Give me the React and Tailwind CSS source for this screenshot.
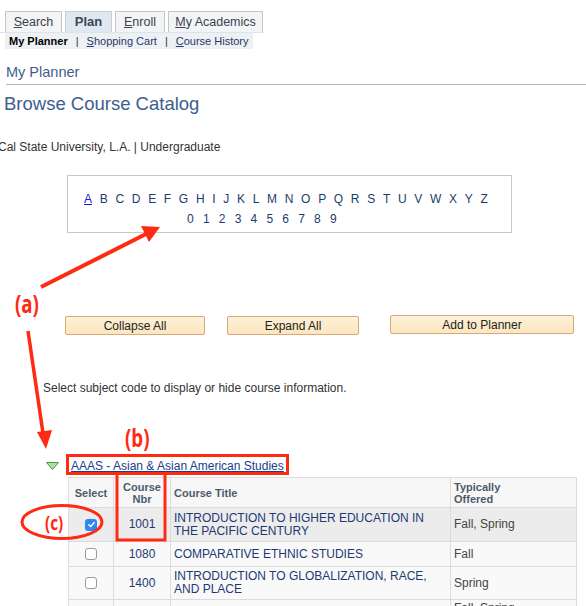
import React from 'react';

const letters = 'ABCDEFGHIJKLMNOPQRSTUVWXYZ'.split('');
const digits = '0123456789'.split('');

const courses = [
    { nbr: '1001', title: ['INTRODUCTION TO HIGHER EDUCATION IN', 'THE PACIFIC CENTURY'], offered: 'Fall, Spring', checked: true },
    { nbr: '1080', title: ['COMPARATIVE ETHNIC STUDIES'], offered: 'Fall' },
    { nbr: '1400', title: ['INTRODUCTION TO GLOBALIZATION, RACE,', 'AND PLACE'], offered: 'Spring' },
    { nbr: '', title: [''], offered: 'Fall, Spring' },
];

const Tab = ({ label, first, active, w }) => (
    <div
        className={`${w} h-[21px] flex items-center justify-center border border-b-0 whitespace-nowrap ${active
            ? 'bg-[#dfe8f1] border-[#c5d0dc] font-bold text-[#3b4656] text-[13px]'
            : 'bg-[#f3f4f6] border-[#c3c8ce] text-[#3a4350] text-[12.5px]'}`}
    >
        {active ? (
            label
        ) : (
            <span>
                <span className="underline">{first}</span>
                {label.slice(first.length)}
            </span>
        )}
    </div>
);

const Btn = ({ children, className }) => (
    <button className={`h-[19px] rounded-[2px] border border-[#d9a77a] bg-gradient-to-b from-[#fdf1d8] to-[#fbe6bf] text-[12px] text-[#222] ${className}`}>
        {children}
    </button>
);

const Check = ({ checked }) =>
    checked ? (
        <span className="w-[12px] h-[12px] rounded-[3px] bg-[#2f86f6] inline-flex items-center justify-center">
            <svg width="9" height="9" viewBox="0 0 10 10">
                <path d="M2 5.2 L4.2 7.3 L8 2.8" fill="none" stroke="white" strokeWidth="1.6" strokeLinecap="round" strokeLinejoin="round" />
            </svg>
        </span>
    ) : (
        <span className="w-[12px] h-[12px] rounded-[3px] border border-[#9a9a9a] bg-white inline-block" />
    );

const Annotations = () => (
    <svg className="absolute inset-0 pointer-events-none" width="586" height="606">
        <g stroke="#ff2a12" fill="#ff2a12">
            <line x1="41" y1="287" x2="146" y2="234" strokeWidth="4" />
            <polygon points="160,227 141,226 149,242" stroke="none" />
            <line x1="28" y1="331" x2="44" y2="440" strokeWidth="3.5" />
            <polygon points="46,449 37,432 52,430" stroke="none" />
            <rect x="67.5" y="455.5" width="220" height="18" fill="none" strokeWidth="3" />
            <path d="M117 474 V540 H165 V474" fill="none" strokeWidth="3" />
            <ellipse cx="62" cy="522" rx="40" ry="16.5" fill="none" strokeWidth="3" />
        </g>
        <g fill="#ff2a12" fontFamily="'Open Sans', sans-serif" fontWeight="bold">
            <text x="15" y="313" fontSize="22" transform="translate(15 313) scale(0.85 1.1) translate(-15 -313)">(a)</text>
            <text x="125" y="447" fontSize="22" transform="translate(125 447) scale(0.85 1.1) translate(-125 -447)">(b)</text>
            <text x="45" y="530" fontSize="18" transform="translate(45 530) scale(0.85 1.1) translate(-45 -530)">(c)</text>
        </g>
    </svg>
);

export default function App() {
    return (
        <div className="relative w-[586px] h-[606px] overflow-hidden bg-white" style={{ fontFamily: '"Liberation Sans", Arial, sans-serif' }}>
            <div className="pt-[11px] pl-[5px] flex gap-[3px]">
                <Tab label="Search" first="S" w="w-[57px]" />
                <Tab label="Plan" active w="w-[47px]" />
                <Tab label="Enroll" first="E" w="w-[50px]" />
                <Tab label="My Academics" first="M" w="w-[95px]" />
            </div>
            <div className="w-[264px] h-[1px] bg-[#dbe3ec]" />
            <div className="ml-[5px] w-[248px] h-[16px] bg-[#eef1f3] flex items-center whitespace-nowrap text-[11px] text-[#333] pl-[4px]">
                <span className="font-bold text-black">My Planner</span>
                <span className="mx-[8px]">|</span>
                <span className="text-[#1e3a6a]"><span className="underline">S</span>hopping Cart</span>
                <span className="mx-[8px]">|</span>
                <span className="text-[#1e3a6a]"><span className="underline">C</span>ourse History</span>
            </div>

            <div className="mt-[14px] ml-[6px] text-[14.5px] text-[#3d5f8c] leading-[18px]">My Planner</div>
            <div className="mt-[3px] ml-[6px] h-[1px] bg-[#b7b7b7]" />

            <div className="mt-[8px] ml-[4px] text-[18.5px] text-[#3c5e8e] leading-[22px]">Browse Course Catalog</div>

            <div className="mt-[25px] -ml-[2px] text-[12px] text-[#333] leading-[14px]">Cal State University, L.A. | Undergraduate</div>

            <div className="mt-[21px] ml-[67px] w-[445px] h-[58px] border border-[#c8c8c8] pt-[16px]">
                <div className="flex gap-[7.7px] pl-[16px] text-[12px] leading-[14px] text-[#1c3c6c]">
                    {letters.map((l) => (
                        <span key={l} className={l === 'A' ? 'text-[#1a1adc] underline' : ''}>{l}</span>
                    ))}
                </div>
                <div className="mt-[6px] flex gap-[9.2px] pl-[119px] text-[12px] leading-[14px] text-[#1c3c6c]">
                    {digits.map((d) => (
                        <span key={d}>{d}</span>
                    ))}
                </div>
            </div>

            <div className="mt-[82px] ml-[65px] flex items-start">
                <Btn className="w-[140px] mt-[1px]">Collapse All</Btn>
                <Btn className="w-[132px] ml-[22px] mt-[1px]">Expand All</Btn>
                <Btn className="w-[184px] ml-[31px]">Add to Planner</Btn>
            </div>

            <div className="mt-[46px] ml-[43px] text-[12px] text-[#333] leading-[14px]">Select subject code to display or hide course information.</div>

            <div className="mt-[62px] ml-[46px] flex items-center">
                <svg width="13" height="8" viewBox="0 0 13 8">
                    <polygon points="0.5,0.5 12.5,0.5 6.5,7.5" fill="#a9dfa0" stroke="#4f9a45" strokeWidth="1" />
                </svg>
                <span className="ml-[12px] text-[12px] text-[#1a3c8c] underline">AAAS - Asian &amp; Asian American Studies</span>
            </div>

            <table className="mt-[2px] ml-[68px] border-collapse border border-[#cfcfcf] text-[12px]">
                <thead>
                    <tr className="bg-[#f7f7f7] text-[11px] font-bold text-[#4c5b6b] h-[30px] leading-[12px]">
                        <th className="w-[45px] border border-[#dcdcdc] text-center font-bold">Select</th>
                        <th className="w-[57px] border border-[#dcdcdc] text-center font-bold">Course<br />Nbr</th>
                        <th className="w-[280px] border border-[#dcdcdc] text-left pl-[3px] font-bold">Course Title</th>
                        <th className="w-[126px] border border-[#dcdcdc] text-left pl-[3px] font-bold">Typically<br />Offered</th>
                    </tr>
                </thead>
                <tbody>
                    {courses.map((c, i) => (
                        <tr key={i} className={`${i === 0 ? 'bg-[#ececec] h-[34px]' : i === 1 ? 'bg-[#f9f9f9] h-[25px]' : 'bg-[#f9f9f9] h-[33px]'} leading-[13px]`}>
                            <td className="border border-[#dcdcdc] text-center align-middle">
                                <span className="inline-flex pt-[2px]">{c.nbr && <Check checked={c.checked} />}</span>
                            </td>
                            <td className="border border-[#dcdcdc] text-center text-[#1d3a74]">{c.nbr}</td>
                            <td className="border border-[#dcdcdc] pl-[3px] text-[#1d3a74]">
                                {c.title.map((t, j) => (
                                    <div key={j}>{t}</div>
                                ))}
                            </td>
                            <td className={`border border-[#dcdcdc] pl-[3px] text-[#444] ${i === 3 ? 'align-top pt-[2px]' : ''}`}>{c.offered}</td>
                        </tr>
                    ))}
                </tbody>
            </table>

            <Annotations />
        </div>
    );
}
